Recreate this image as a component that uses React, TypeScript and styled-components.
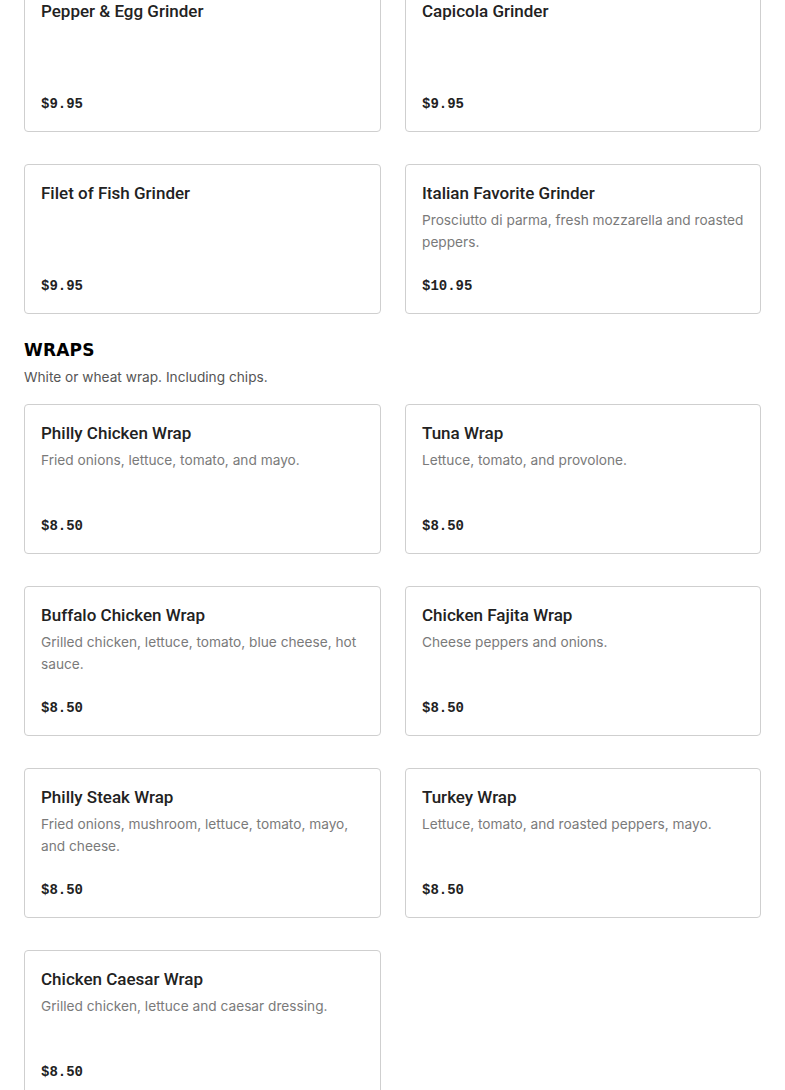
import styled, { createGlobalStyle } from 'styled-components';

const GlobalStyle = createGlobalStyle`
  body {
    margin: 0;
    background: #fff;
    font-family: Inter, "Noto Sans", sans-serif;
    color: #222;
    overflow: hidden;
  }
`;

type Item = { name: string; desc?: string; price: string };

const grinders: Item[] = [
  { name: 'Pepper & Egg Grinder', price: '$9.95' },
  { name: 'Capicola Grinder', price: '$9.95' },
  { name: 'Filet of Fish Grinder', price: '$9.95' },
  {
    name: 'Italian Favorite Grinder',
    desc: 'Prosciutto di parma, fresh mozzarella and roasted peppers.',
    price: '$10.95',
  },
];

const wraps: Item[] = [
  { name: 'Philly Chicken Wrap', desc: 'Fried onions, lettuce, tomato, and mayo.', price: '$8.50' },
  { name: 'Tuna Wrap', desc: 'Lettuce, tomato, and provolone.', price: '$8.50' },
  { name: 'Buffalo Chicken Wrap', desc: 'Grilled chicken, lettuce, tomato, blue cheese, hot sauce.', price: '$8.50' },
  { name: 'Chicken Fajita Wrap', desc: 'Cheese peppers and onions.', price: '$8.50' },
  { name: 'Philly Steak Wrap', desc: 'Fried onions, mushroom, lettuce, tomato, mayo, and cheese.', price: '$8.50' },
  { name: 'Turkey Wrap', desc: 'Lettuce, tomato, and roasted peppers, mayo.', price: '$8.50' },
  { name: 'Chicken Caesar Wrap', desc: 'Grilled chicken, lettuce and caesar dressing.', price: '$8.50' },
];

const Page = styled.div`
  margin-top: -18px;
  padding: 0 24px 0 24px;
`;

const Section = styled.section`
  margin-bottom: 25px;
`;

const SectionTitle = styled.h2`
  margin: 0;
  font-family: "DejaVu Sans", sans-serif;
  font-weight: 900;
  font-size: 17px;
  line-height: 22px;
  letter-spacing: 0.2px;
  color: #000;
`;

const SectionNote = styled.p`
  margin: 5px 0 16px;
  font-size: 13.7px;
  line-height: 22px;
  color: #555;
`;

const Grid = styled.div`
  display: grid;
  grid-template-columns: 357px 356px;
  column-gap: 24px;
  row-gap: 32px;
`;

const Card = styled.div`
  box-sizing: border-box;
  min-height: 150px;
  display: flex;
  flex-direction: column;
  padding: 17px 16px 17px;
  border: 1px solid #cfcfcf;
  border-radius: 4px;
`;

const Name = styled.h3`
  margin: 0;
  font-family: Roboto, Inter, sans-serif;
  font-size: 17px;
  font-weight: 500;
  line-height: 22px;
  color: #222;
`;

const Desc = styled.p`
  margin: 5px 0 0;
  font-size: 13.7px;
  line-height: 22px;
  color: #7a7a7a;
`;

const Price = styled.div`
  margin-top: auto;
  font-family: "Liberation Mono", monospace;
  font-weight: 700;
  font-size: 14px;
  line-height: 20px;
  color: #222;
`;

const MenuCard = ({ item }: { item: Item }) => (
  <Card>
    <Name>{item.name}</Name>
    {item.desc && <Desc>{item.desc}</Desc>}
    <Price>{item.price}</Price>
  </Card>
);

export default function App() {
  return (
    <>
      <GlobalStyle />
      <Page>
        <Section>
          <Grid>
            {grinders.map((g) => (
              <MenuCard key={g.name} item={g} />
            ))}
          </Grid>
        </Section>
        <Section>
          <SectionTitle>WRAPS</SectionTitle>
          <SectionNote>White or wheat wrap. Including chips.</SectionNote>
          <Grid>
            {wraps.map((w) => (
              <MenuCard key={w.name} item={w} />
            ))}
          </Grid>
        </Section>
      </Page>
    </>
  );
}
